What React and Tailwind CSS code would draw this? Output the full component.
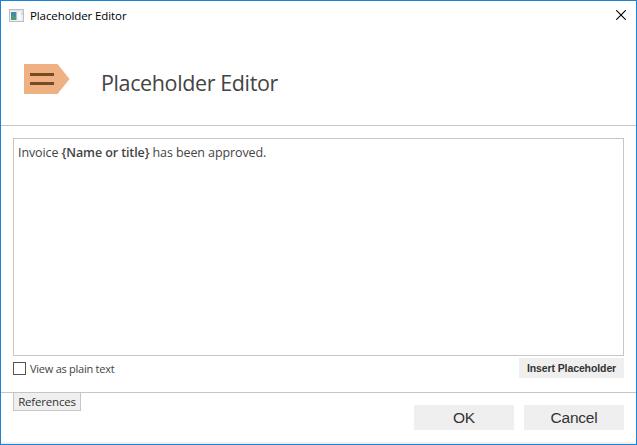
function WindowIcon() {
  return (
    <svg width="15" height="13" viewBox="0 0 15 13" shapeRendering="crispEdges">
      <rect width="15" height="13" fill="#b9bec4" />
      <rect x="1" y="1" width="13" height="1" fill="#dfe3e6" />
      <rect x="1" y="2" width="13" height="10" fill="#eef0f3" />
      <rect x="2" y="3" width="5" height="8" fill="#4a8aa0" />
      <rect x="2" y="7" width="5" height="4" fill="#4f9a7c" />
      <rect x="7" y="3" width="1" height="8" fill="#a9c8d0" />
      <rect x="9" y="3" width="3" height="8" fill="#fafafc" />
      <rect x="12" y="3" width="2" height="3" fill="#cfdde0" />
    </svg>
  );
}

function TagIcon() {
  return (
    <svg width="46" height="30" viewBox="0 0 46 30">
      <path d="M0 0H33.5L45.5 15L33.5 30H0Z" fill="#efb083" />
      <path d="M6 9H30V12H6ZM6 18H30V21H6Z" fill="#794b20" />
    </svg>
  );
}

export default function App() {
  return (
    <div className="flex h-[445px] w-[637px] flex-col border border-[#1883d7] bg-white font-['Open_Sans','Noto_Sans',sans-serif] text-[#444444]">
      <header className="flex h-[124px] shrink-0 flex-col">
        <div className="flex h-[29px] items-center pl-2 pr-[10px]">
          <WindowIcon />
          <h1 className="ml-[6px] whitespace-nowrap text-[11.5px] leading-[16px] tracking-[-0.1px] text-black">
            Placeholder Editor
          </h1>
          <button className="mb-px ml-auto" aria-label="Close">
            <svg width="10" height="10" viewBox="0 0 10 10">
              <path d="M0.2 0.2L9.8 9.8M9.8 0.2L0.2 9.8" stroke="#000" strokeWidth="1.1" />
            </svg>
          </button>
        </div>
        <div className="flex items-start pl-[23px] pt-[34px]">
          <TagIcon />
          <h2 className="ml-[31px] mt-1 whitespace-nowrap text-[21.5px] leading-[30px] tracking-[-0.38px]">
            Placeholder Editor
          </h2>
        </div>
      </header>
      <main className="flex h-[268px] shrink-0 flex-col border-y border-[#c6c6c6] px-3 pt-3">
        <div className="h-[218px] shrink-0 border border-[#c6c6c6] px-1 pt-[5px] text-[12.5px] leading-[18px] tracking-[-0.1px]">
          <p className="whitespace-nowrap">
            Invoice <span className="font-semibold">{"{Name or title}"}</span> has been approved.
          </p>
        </div>
        <div className="mt-[2px] flex h-5 items-center justify-between">
          <label className="flex items-center gap-1 text-[11px] leading-4 tracking-[-0.25px]">
            <span className="h-[13px] w-[13px] border border-[#555555] bg-white" />
            <span className="mt-px whitespace-nowrap">View as plain text</span>
          </label>
          <button className="h-5 w-[105px] whitespace-nowrap bg-[#efefef] font-['Liberation_Sans',sans-serif] text-[10.5px] font-bold leading-5 tracking-[-0.1px] text-[#333333]">
            Insert Placeholder
          </button>
        </div>
      </main>
      <footer className="flex h-[49px] shrink-0 items-start justify-between px-3">
        <button className="h-[18px] w-[68px] whitespace-nowrap border border-t-0 border-[#c6c6c6] bg-[#efefef] text-[11.5px] leading-[17px] tracking-[-0.2px] text-[#333333]">
          References
        </button>
        <div className="mt-3 flex gap-[10px] font-['Liberation_Sans',sans-serif] text-[15.5px] leading-[25px] tracking-[-0.2px] text-[#333333]">
          <button className="h-[25px] w-[100px] bg-[#efefef]">OK</button>
          <button className="h-[25px] w-[100px] bg-[#efefef]">Cancel</button>
        </div>
      </footer>
      <div className="h-[2px] bg-[#efefef]" />
    </div>
  );
}
